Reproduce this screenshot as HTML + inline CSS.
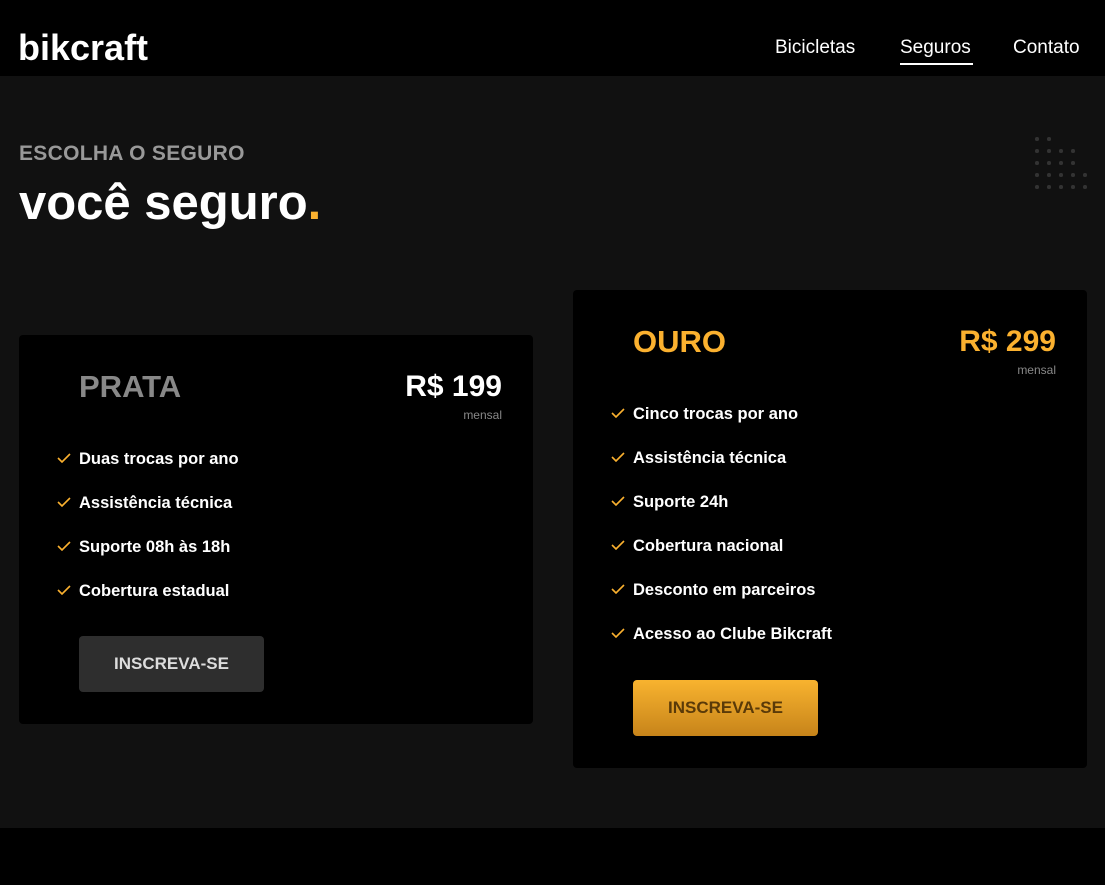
<!DOCTYPE html>
<html><head><meta charset="utf-8"><style>
*{margin:0;padding:0;box-sizing:border-box}
body{width:1105px;height:885px;background:#111;font-family:"Liberation Sans",sans-serif;color:#fff;position:relative;overflow:hidden}
header{position:absolute;left:0;top:0;width:1105px;height:76px;background:#000}
.logo{position:absolute;left:18px;top:28px;font-size:36px;font-weight:bold;letter-spacing:0px;line-height:40px}
nav a{position:absolute;top:37px;font-size:19px;color:#fff;text-decoration:none;line-height:22px}
.u{position:absolute;left:900px;top:63px;width:73px;height:2px;background:#fff}
.sub{position:absolute;left:19px;top:142px;font-size:21px;font-weight:bold;color:#999;line-height:24px;letter-spacing:0.3px}
.h1{position:absolute;left:19px;top:175px;font-size:49px;font-weight:bold;line-height:56px;letter-spacing:0px}
.h1 span{color:#fbb12f}
.dot{position:absolute;width:3.5px;height:3.5px;border-radius:50%;background:#333}
.card{position:absolute;background:#000;border-radius:4px}
.t{position:absolute;left:60px;font-size:31px;font-weight:bold;line-height:34px}
.p{position:absolute;right:31px;font-size:30px;font-weight:bold;line-height:34px}
.m{position:absolute;right:31px;font-size:12px;color:#888;line-height:14px}
ul{position:absolute;left:38px;list-style:none}
li{height:44px;font-size:16.5px;font-weight:bold;line-height:20px;padding-left:22px;position:relative}
li svg{position:absolute;left:0;top:4px}
.b{position:absolute;left:60px;width:185px;height:56px;border-radius:4px;font-size:17px;font-weight:bold;text-align:center;line-height:56px}
footer{position:absolute;left:0;top:828px;width:1105px;height:57px;background:#000}
</style></head><body>
<header><div class="logo">bikcraft</div>
<nav><a style="left:775px">Bicicletas</a><a style="left:900px">Seguros</a><a style="left:1013px">Contato</a></nav><div class="u"></div></header>
<div class="sub">ESCOLHA O SEGURO</div>
<div class="h1">você seguro<span>.</span></div>
<div class="dot" style="left:1035px;top:137px"></div><div class="dot" style="left:1047px;top:137px"></div>
<div class="dot" style="left:1035px;top:149px"></div><div class="dot" style="left:1047px;top:149px"></div><div class="dot" style="left:1059px;top:149px"></div><div class="dot" style="left:1071px;top:149px"></div>
<div class="dot" style="left:1035px;top:161px"></div><div class="dot" style="left:1047px;top:161px"></div><div class="dot" style="left:1059px;top:161px"></div><div class="dot" style="left:1071px;top:161px"></div>
<div class="dot" style="left:1035px;top:173px"></div><div class="dot" style="left:1047px;top:173px"></div><div class="dot" style="left:1059px;top:173px"></div><div class="dot" style="left:1071px;top:173px"></div><div class="dot" style="left:1083px;top:173px"></div>
<div class="dot" style="left:1035px;top:185px"></div><div class="dot" style="left:1047px;top:185px"></div><div class="dot" style="left:1059px;top:185px"></div><div class="dot" style="left:1071px;top:185px"></div><div class="dot" style="left:1083px;top:185px"></div>

<div class="card" style="left:19px;top:335px;width:514px;height:389px">
<div class="t" style="top:35px;color:#888">PRATA</div>
<div class="p" style="top:35px">R$ 199</div>
<div class="m" style="top:73px">mensal</div>
<ul style="top:114px">
<li><svg width="14" height="10"><path d="M1 5l4 4 8-8" stroke="#fbb12f" stroke-width="1.6" fill="none"/></svg>Duas trocas por ano</li>
<li><svg width="14" height="10"><path d="M1 5l4 4 8-8" stroke="#fbb12f" stroke-width="1.6" fill="none"/></svg>Assistência técnica</li>
<li><svg width="14" height="10"><path d="M1 5l4 4 8-8" stroke="#fbb12f" stroke-width="1.6" fill="none"/></svg>Suporte 08h às 18h</li>
<li><svg width="14" height="10"><path d="M1 5l4 4 8-8" stroke="#fbb12f" stroke-width="1.6" fill="none"/></svg>Cobertura estadual</li>
</ul>
<div class="b" style="top:301px;background:#2e2e2e;color:#ddd">INSCREVA-SE</div>
</div>

<div class="card" style="left:573px;top:290px;width:514px;height:478px">
<div class="t" style="top:35px;color:#fbb12f">OURO</div>
<div class="p" style="top:35px;color:#fbb12f">R$ 299</div>
<div class="m" style="top:73px">mensal</div>
<ul style="top:114px">
<li><svg width="14" height="10"><path d="M1 5l4 4 8-8" stroke="#fbb12f" stroke-width="1.6" fill="none"/></svg>Cinco trocas por ano</li>
<li><svg width="14" height="10"><path d="M1 5l4 4 8-8" stroke="#fbb12f" stroke-width="1.6" fill="none"/></svg>Assistência técnica</li>
<li><svg width="14" height="10"><path d="M1 5l4 4 8-8" stroke="#fbb12f" stroke-width="1.6" fill="none"/></svg>Suporte 24h</li>
<li><svg width="14" height="10"><path d="M1 5l4 4 8-8" stroke="#fbb12f" stroke-width="1.6" fill="none"/></svg>Cobertura nacional</li>
<li><svg width="14" height="10"><path d="M1 5l4 4 8-8" stroke="#fbb12f" stroke-width="1.6" fill="none"/></svg>Desconto em parceiros</li>
<li><svg width="14" height="10"><path d="M1 5l4 4 8-8" stroke="#fbb12f" stroke-width="1.6" fill="none"/></svg>Acesso ao Clube Bikcraft</li>
</ul>
<div class="b" style="top:390px;background:linear-gradient(#f8b32f,#c7841a);color:#5a3a08">INSCREVA-SE</div>
</div>
<footer></footer>
</body></html>
